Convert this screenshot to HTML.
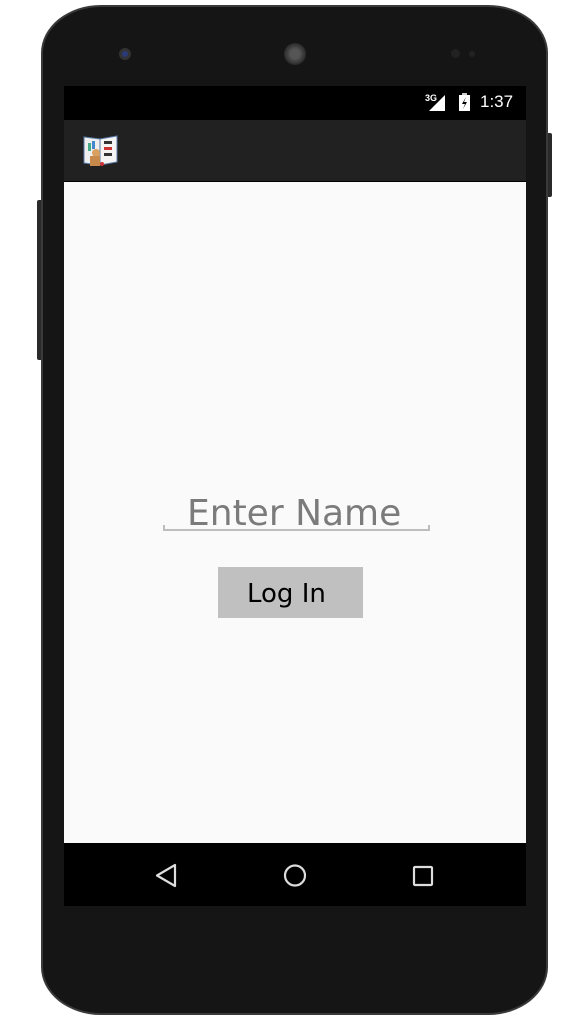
<!DOCTYPE html>
<html><head><meta charset="utf-8"><style>
html,body{margin:0;padding:0;background:#fff;width:587px;height:1030px;overflow:hidden;position:relative;font-family:"DejaVu Sans","Liberation Sans",sans-serif}
.abs{position:absolute}
.body{left:41px;top:5px;width:507px;height:1010px;background:#151515;border-radius:60px/48px;border:2px solid #3a3a3a;box-sizing:border-box}
.screen{left:64px;top:86px;width:462px;height:820px;background:#000}
</style></head><body>
<div class="abs" style="left:37px;top:200px;width:8px;height:160px;background:#2a2a2a;border-radius:2px"></div>
<div class="abs" style="left:544px;top:133px;width:8px;height:64px;background:#2a2a2a;border-radius:2px"></div>
<div class="abs body"></div>
<div class="abs" style="left:119px;top:48px;width:12px;height:12px;border-radius:50%;background:#333;"></div>
<div class="abs" style="left:122px;top:51px;width:6px;height:6px;border-radius:50%;background:#2b3a78;"></div>
<div class="abs" style="left:284px;top:43px;width:22px;height:22px;border-radius:50%;background:radial-gradient(#555 30%,#2a2a2a 70%);"></div>
<div class="abs" style="left:451px;top:49px;width:9px;height:9px;border-radius:50%;background:#222;"></div>
<div class="abs" style="left:469px;top:51px;width:6px;height:6px;border-radius:50%;background:#222;"></div>
<div class="abs screen"></div>
<div class="abs" style="left:425px;top:93px;color:#fff;font:bold 9px 'Liberation Sans',sans-serif">3G</div>
<svg class="abs" style="left:428px;top:95px" width="18" height="17"><polygon points="17,0 17,16 1,16" fill="#fff"/></svg>
<svg class="abs" style="left:458px;top:93px" width="14" height="19"><rect x="4" y="0" width="5" height="3" fill="#ccc"/><rect x="1" y="2" width="11" height="16" fill="#fff"/><polygon points="8,4 4,11 7,11 5,16 9,9 6,9" fill="#000"/></svg>
<div class="abs" style="left:480px;top:92px;color:#fff;font:17px 'Liberation Sans',sans-serif">1:37</div>
<div class="abs" style="left:64px;top:120px;width:462px;height:61px;background:#212121"></div>
<svg class="abs" style="left:82px;top:133px" width="38" height="34">
<path d="M2 4 L18 6 L18 32 L2 30Z" fill="#eee" stroke="#5a7aa8"/>
<path d="M18 6 L35 3 L35 29 L18 32Z" fill="#f4f4f4" stroke="#5a7aa8"/>
<rect x="22" y="8" width="8" height="3" fill="#333"/><rect x="22" y="14" width="8" height="3" fill="#c33"/><rect x="22" y="20" width="8" height="3" fill="#333"/>
<rect x="6" y="10" width="3" height="8" fill="#4a8"/><rect x="10" y="8" width="3" height="8" fill="#48c"/>
<circle cx="14" cy="20" r="4" fill="#d9a060"/><rect x="8" y="23" width="10" height="10" fill="#c88a4a"/><circle cx="20" cy="31" r="2" fill="#c33"/>
</svg>
<div class="abs" style="left:64px;top:182px;width:462px;height:661px;background:#fafafa"></div>
<div class="abs" style="left:187px;top:492px;color:#7b7b7b;font-size:36px;line-height:44px;white-space:nowrap">Enter Name</div>
<div class="abs" style="left:163px;top:529px;width:267px;height:2px;background:#bdbdbd"></div>
<div class="abs" style="left:163px;top:525px;width:2px;height:6px;background:#bdbdbd"></div>
<div class="abs" style="left:428px;top:525px;width:2px;height:6px;background:#bdbdbd"></div>
<div class="abs" style="left:218px;top:567px;width:145px;height:51px;background:#c0c0c0"></div>
<div class="abs" style="left:247px;top:569px;color:#000;font-size:26px;line-height:51px;white-space:nowrap">Log In</div>
<svg class="abs" style="left:64px;top:843px" width="462" height="63">
<polygon points="111,22 111,43 93,32.5" fill="none" stroke="#ddd" stroke-width="2.2" stroke-linejoin="round"/>
<circle cx="231" cy="32.5" r="10" fill="none" stroke="#ddd" stroke-width="2.2"/>
<rect x="350" y="24" width="18" height="18" rx="1" fill="none" stroke="#ddd" stroke-width="2.2"/>
</svg>
</body></html>
